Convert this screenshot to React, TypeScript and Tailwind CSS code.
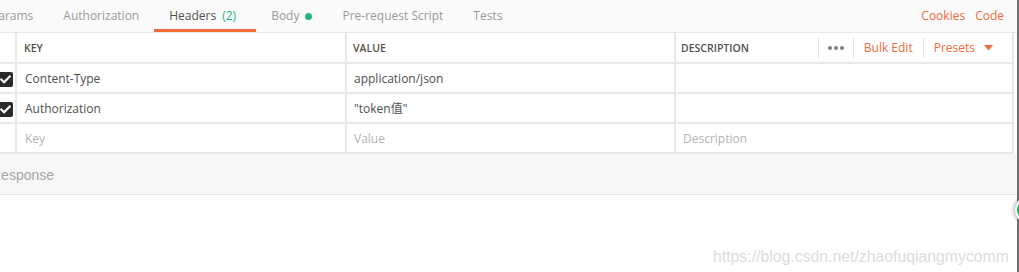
import React from "react";

const Check = () => (
  <svg width="15" height="15" viewBox="0 0 15 15" className="block">
    <rect x="0" y="0" width="15" height="15" rx="2" fill="#2a2a2a" />
    <path d="M3.3 7.6 L6.1 10.3 L11.7 4.6" stroke="#fff" strokeWidth="2.2" fill="none" strokeLinecap="square" />
  </svg>
);

const Cell = ({ children, className = "" }: { children?: React.ReactNode; className?: string }) => (
  <div className={`bg-white flex items-center ${className}`}>{children}</div>
);

export default function App() {
  const rows = [
    { k: "Content-Type", v: "application/json", on: true },
    { k: "Authorization", v: "\"token值\"", on: true },
  ];
  return (
    <div
      className="relative w-[1019px] h-[272px] overflow-hidden bg-white"
      style={{ fontFamily: '"Open Sans", "Noto Sans CJK SC", sans-serif' }}
    >
      {/* tab bar */}
      <div className="flex h-[33px] bg-[#fafafa] border-b border-[#e6e6e6] text-[12px]">
        <div className="flex items-stretch ml-[-24px]">
          <div className="px-[15px] flex items-center text-[#9a9a9a]">Params</div>
          <div className="px-[15px] flex items-center text-[#9a9a9a]">Authorization</div>
          <div className="pl-[15px] pr-[20px] flex items-center text-[#505050] relative">
            Headers<span className="ml-[6px] text-[#26b47f]">(2)</span>
            <div className="absolute left-0 right-0 bottom-[0px] h-[3px] bg-[#f26b3a]" />
          </div>
          <div className="px-[15px] flex items-center text-[#9a9a9a]">
            Body<span className="ml-[6px] w-[7px] h-[7px] rounded-full bg-[#26b47f] inline-block" />
          </div>
          <div className="px-[15px] flex items-center text-[#9a9a9a]">Pre-request Script</div>
          <div className="px-[15px] flex items-center text-[#9a9a9a]">Tests</div>
        </div>
        <div className="ml-auto flex items-center gap-[10px] pr-[15px] text-[#f26b3a] text-[12px]">
          <span>Cookies</span>
          <span>Code</span>
        </div>
      </div>

      {/* table */}
      <div className="w-[1014px] bg-[#e8e8e8] grid grid-cols-[15px_328px_327px_336px] gap-[2px] pr-[2px] pb-[2px] text-[12px]">
        {/* header */}
        <Cell className="h-[29px]" />
        <Cell className="h-[29px] pt-[2px] pl-[7px] text-[10.5px] font-semibold text-[#505050]">KEY</Cell>
        <Cell className="h-[29px] pt-[2px] pl-[6px] text-[10.5px] font-semibold text-[#505050]">VALUE</Cell>
        <Cell className="h-[29px] pl-[5px] text-[10.5px] font-semibold text-[#505050]">
          <span className="pt-[2px]">DESCRIPTION</span>
          <div className="ml-auto flex items-center h-full pt-[1px]">
            <div className="w-px h-[20px] bg-[#e4e4e4]" />
            <div className="pl-[9px] pr-[9px] flex items-center gap-[2px]">
              <span className="w-[4px] h-[4px] rounded-full bg-[#808080]" />
              <span className="w-[4px] h-[4px] rounded-full bg-[#808080]" />
              <span className="w-[4px] h-[4px] rounded-full bg-[#808080]" />
            </div>
            <div className="w-px h-[20px] bg-[#e4e4e4]" />
            <span className="px-[10px] text-[12px] font-normal text-[#f26b3a]">Bulk Edit</span>
            <div className="w-px h-[20px] bg-[#e4e4e4]" />
            <span className="pl-[10px] text-[12px] font-normal text-[#f26b3a] flex items-center">
              Presets
              <svg width="9" height="6" viewBox="0 0 9 6" className="ml-[9px]">
                <path d="M0 0 H9 L4.5 5.5 Z" fill="#f26b3a" />
              </svg>
            </span>
            <span className="w-[19px]" />
          </div>
        </Cell>
        {rows.map((r) => (
          <React.Fragment key={r.k}>
            <Cell className="h-[28px] overflow-hidden pt-[2px]">
              <div className="ml-[-2px]">
                <Check />
              </div>
            </Cell>
            <Cell className="h-[28px] pt-[2px] pl-[8px] text-[#505050]">{r.k}</Cell>
            <Cell className="h-[28px] pt-[2px] pl-[7px] text-[#505050]">{r.v}</Cell>
            <Cell className="h-[28px]" />
          </React.Fragment>
        ))}
        <Cell className="h-[28px]" />
        <Cell className="h-[28px] pt-[2px] pl-[8px] text-[#b3b3b3]">Key</Cell>
        <Cell className="h-[28px] pt-[2px] pl-[7px] text-[#b3b3b3]">Value</Cell>
        <Cell className="h-[28px] pt-[2px] pl-[7px] text-[#b3b3b3]">Description</Cell>
      </div>

      {/* response */}
      <div
        className="h-[41px] bg-[#f7f7f7] border-b border-[#e6e6e6] flex items-center text-[14px] text-[#a6a6a6]"
        style={{ fontFamily: '"Liberation Sans", Arial, sans-serif' }}
      >
        <span className="ml-[-9px] pt-[2px]">Response</span>
      </div>

      {/* watermark */}
      <div
        className="absolute left-[713px] top-[245px] text-[15.8px] text-[#dcdcdc] whitespace-nowrap"
        style={{ fontFamily: '"Liberation Sans", Arial, sans-serif' }}
      >
        https://blog.csdn.net/zhaofuqiangmycomm
      </div>

      {/* right edge line */}
      <div className="absolute right-0 top-0 w-[2px] h-full bg-[#6f6f6f]" />

      {/* floating green button */}
      <div className="absolute left-[1014px] top-[197px] w-[26px] h-[26px] rounded-full bg-white border border-[#cfcfcf] shadow-[0_0_4px_rgba(0,0,0,0.35)] flex items-center justify-center">
        <div className="w-[20px] h-[20px] rounded-full bg-[#1fb544]" />
      </div>
    </div>
  );
}
